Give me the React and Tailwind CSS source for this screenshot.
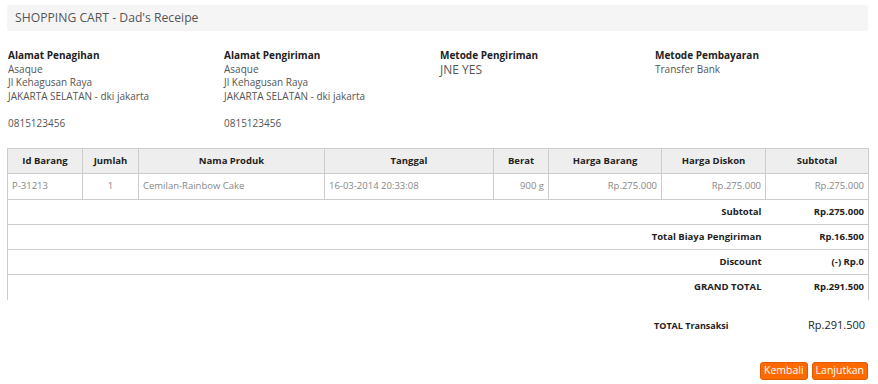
export default function App() {
  const items = [
    ["P-31213", "1", "Cemilan-Rainbow Cake", "16-03-2014 20:33:08", "900 g", "Rp.275.000", "Rp.275.000", "Rp.275.000"],
  ];
  const summary = [
    ["Subtotal", "Rp.275.000"],
    ["Total Biaya Pengiriman", "Rp.16.500"],
    ["Discount", "(-) Rp.0"],
    ["GRAND TOTAL", "Rp.291.500"],
  ];
  return (
    <div className="w-[878px] h-[384px] bg-white text-[#555] font-['Open_Sans',sans-serif] pl-[7px] pr-[10px] pt-[5px]">
      <div className="h-[26px] bg-[#f5f5f5] rounded-[3px] flex items-center pl-[8px] text-[12.2px] text-[#555]">
        SHOPPING CART - Dad's Receipe
      </div>

      <div className="grid grid-cols-[216px_216px_215px_214px] mt-[18px] pl-[1px] text-[10px] leading-[13.5px]">
        <div>
          <div className="font-bold text-[#222]">Alamat Penagihan</div>
          <div>Asaque</div>
          <div>Jl Kehagusan Raya</div>
          <div>JAKARTA SELATAN - dki jakarta</div>
          <div className="mt-[13.5px]">0815123456</div>
        </div>
        <div>
          <div className="font-bold text-[#222]">Alamat Pengiriman</div>
          <div>Asaque</div>
          <div>Jl Kehagusan Raya</div>
          <div>JAKARTA SELATAN - dki jakarta</div>
          <div className="mt-[13.5px]">0815123456</div>
        </div>
        <div>
          <div className="font-bold text-[#222]">Metode Pengiriman</div>
          <div className="text-[12px] leading-[14px]">JNE YES</div>
        </div>
        <div>
          <div className="font-bold text-[#222]">Metode Pembayaran</div>
          <div>Transfer Bank</div>
        </div>
      </div>

      <table className="mt-[18px] w-[861px] table-fixed border-collapse text-[9.5px] border-x border-[#ccc]">
        <colgroup>
          <col className="w-[75px]" />
          <col className="w-[56px]" />
          <col className="w-[186px]" />
          <col className="w-[169px]" />
          <col className="w-[55px]" />
          <col className="w-[113px]" />
          <col className="w-[104px]" />
          <col className="w-[103px]" />
        </colgroup>
        <thead>
          <tr className="h-[25px] bg-[#eeeeee] text-[#222] border-t border-[#ccc]">
            {["Id Barang", "Jumlah", "Nama Produk", "Tanggal", "Berat", "Harga Barang", "Harga Diskon", "Subtotal"].map((h) => (
              <th key={h} className="border border-[#ccc] font-bold text-center px-[4px]">{h}</th>
            ))}
          </tr>
        </thead>
        <tbody>
          {items.map((r) => (
            <tr key={r[0]} className="h-[26px] text-[#888]">
              <td className="border border-[#ccc] px-[4px] text-left">{r[0]}</td>
              <td className="border border-[#ccc] px-[4px] text-center">{r[1]}</td>
              <td className="border border-[#ccc] px-[4px] text-left">{r[2]}</td>
              <td className="border border-[#ccc] px-[4px] text-left">{r[3]}</td>
              <td className="border border-[#ccc] px-[4px] text-right">{r[4]}</td>
              <td className="border border-[#ccc] px-[4px] text-right">{r[5]}</td>
              <td className="border border-[#ccc] px-[4px] text-right">{r[6]}</td>
              <td className="border border-[#ccc] px-[4px] text-right">{r[7]}</td>
            </tr>
          ))}
          {summary.map(([l, v], i) => (
            <tr key={l} className={"h-[25px] text-[#222] font-bold " + (i < 3 ? "border-b border-[#ccc]" : "")}>
              <td colSpan={7} className="text-right pr-[4px]">{l}</td>
              <td className="text-right pr-[4px]">{v}</td>
            </tr>
          ))}
        </tbody>
      </table>

      <div className="flex justify-end items-center mt-[16px] h-[20px]">
        <div className="text-[9px] font-bold text-[#222] w-[154px]">TOTAL Transaksi</div>
        <div className="text-[11px] text-[#222] w-[60px] text-right pr-[4px]">Rp.291.500</div>
      </div>

      <div className="flex justify-end gap-[4px] mt-[26px]">
        <button className="h-[18px] px-[3px] rounded-[3px] bg-[#ff6a00] border border-[#e05a00] text-white text-[10.5px] leading-none">Kembali</button>
        <button className="h-[18px] px-[3px] rounded-[3px] bg-[#ff6a00] border border-[#e05a00] text-white text-[10.5px] leading-none">Lanjutkan</button>
      </div>
    </div>
  );
}
